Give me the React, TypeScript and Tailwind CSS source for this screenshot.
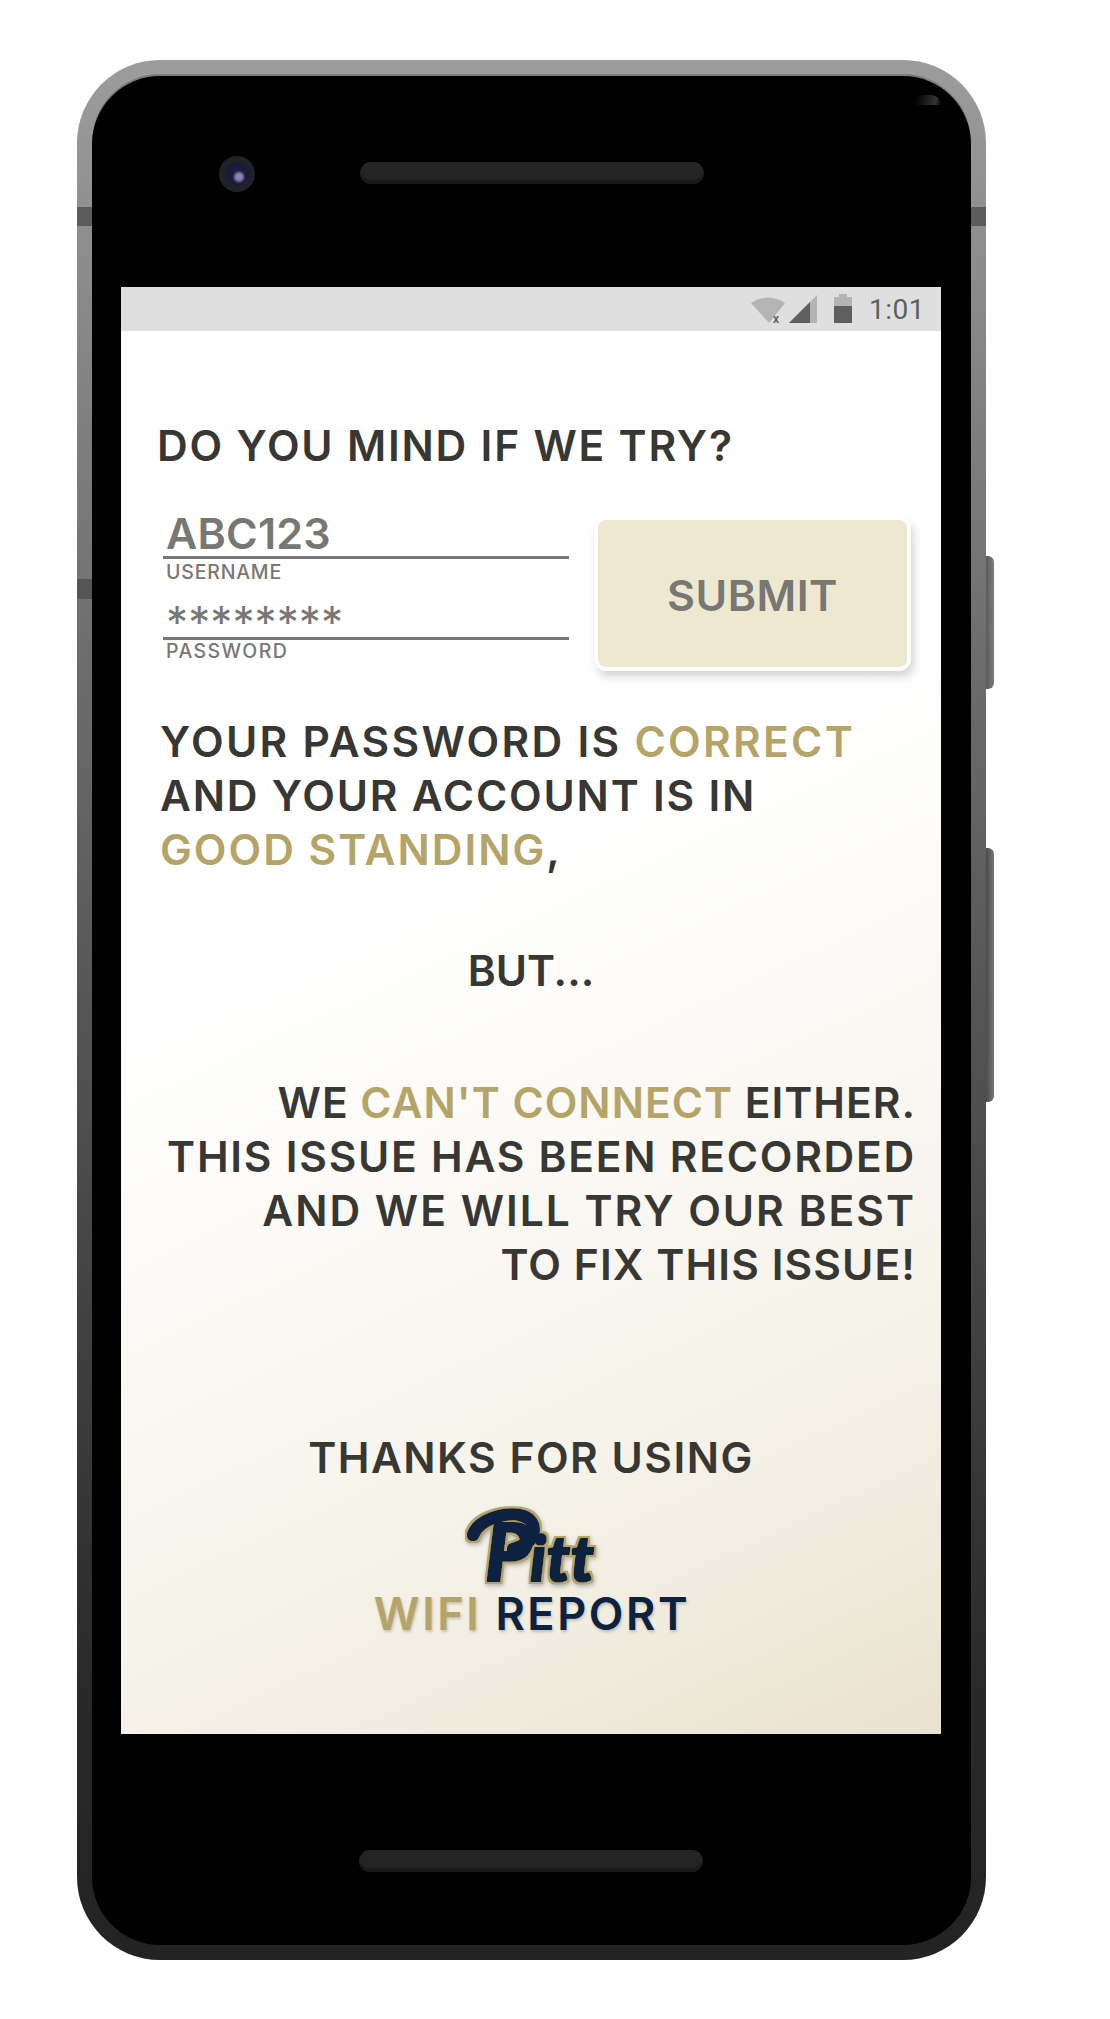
const textFont = "font-['Inter',sans-serif]"

function StatusIcons() {
  return (
    <svg width="102" height="32" viewBox="0 0 102 32" className="shrink-0">
      <path d="M0 9 Q17 -2 34 9 L18 29 Z" fill="#b4b4b4" />
      <text x="22" y="29" fontSize="12" fontWeight="600" fill="#5f5f5f" fontFamily="Roboto, sans-serif">x</text>
      <path d="M38 29 L66 1 V29 Z" fill="#b4b4b4" />
      <path d="M38 29 L59 8 V29 Z" fill="#5f5f5f" />
      <path d="M88 0 H96 V3 H101 V12 H83 V3 H88 Z" fill="#b4b4b4" />
      <rect x="83" y="12" width="18" height="17" fill="#5f5f5f" />
    </svg>
  )
}

function PittLogo() {
  return (
    <svg width="144" height="85" viewBox="0 0 144 85" className="ml-[3px] block overflow-visible drop-shadow-[1px_2px_2px_rgba(0,0,0,0.25)]">
      <defs>
        <filter id="pitt-outline" x="-10%" y="-10%" width="120%" height="120%">
          <feMorphology in="SourceAlpha" operator="dilate" radius="1.2" result="body" />
          <feGaussianBlur in="body" stdDeviation="0.5" result="bodySoft" />
          <feFlood floodColor="#0c2340" />
          <feComposite in2="bodySoft" operator="in" result="navy" />
          <feMorphology in="SourceAlpha" operator="dilate" radius="3" result="edge" />
          <feGaussianBlur in="edge" stdDeviation="0.6" result="edgeSoft" />
          <feFlood floodColor="#b5a468" />
          <feComposite in2="edgeSoft" operator="in" result="gold" />
          <feMerge>
            <feMergeNode in="gold" />
            <feMergeNode in="navy" />
          </feMerge>
        </filter>
      </defs>
      <g filter="url(#pitt-outline)">
        <path d="M12 29 C18 12 48 5 62 10 C78 16 78 36 52 43" fill="none" stroke="#0c2340" strokeWidth="10" strokeLinecap="round" />
        <text x="24" y="75" fontFamily="'Lato', sans-serif" fontStyle="italic" fontWeight="900" fontSize="80" fill="#0c2340">
          P<tspan dx="-2" fontSize="62" letterSpacing="1">itt</tspan>
        </text>
      </g>
    </svg>
  )
}

export default function App() {
  return (
    <div className={`min-h-[2019px] bg-white pl-[77px] pt-[60px] ${textFont}`}>
      <div className="relative h-[1900px] w-[909px] rounded-[83px] bg-[linear-gradient(180deg,#9c9c9c_0%,#6f6f6f_30%,#4f4f4f_55%,#2a2a2a_85%,#232323_100%)] px-[15px] pb-[15px] pt-[16px]">
        {/* frame bands */}
        <div className="absolute left-0 top-[147px] h-[19px] w-[15px] bg-[#5c5c5c]" />
        <div className="absolute right-0 top-[147px] h-[19px] w-[15px] bg-[#5c5c5c]" />
        <div className="absolute left-0 top-[519px] h-[20px] w-[15px] bg-[#555555]" />

        {/* side buttons */}
        <div className="absolute right-[-8px] top-[496px] h-[133px] w-2 rounded-r-[6px] bg-[linear-gradient(90deg,#5a5a5a,#7d7d7d)]" />
        <div className="absolute right-[-8px] top-[788px] h-[254px] w-2 rounded-r-[6px] bg-[linear-gradient(90deg,#4a4a4a,#777777)]" />

        <div className="relative flex h-full flex-col rounded-[68px] bg-black shadow-[0_-2px_0_rgba(0,0,0,0.2)]">
          <div className="absolute right-[30px] top-[19px] h-[10px] w-[36px] rounded-tr-[20px] bg-[linear-gradient(100deg,transparent_30%,#4a4a4a_85%,transparent)] opacity-70" />

          {/* top bezel */}
          <div className="flex h-[211px] w-full items-start pl-[127px] pt-[80px]">
            <div className="flex h-9 w-9 items-center justify-center rounded-full bg-[#222226]">
              <div className="relative h-6 w-6 rounded-full bg-[#1b1a3a]">
                <div className="absolute left-[9px] top-[10px] h-[10px] w-[10px] rounded-full bg-[#8a82b0] blur-[1px]" />
              </div>
            </div>
            <div className="ml-[105px] mt-[6px] h-[22px] w-[344px] rounded-full bg-[#242424] shadow-[inset_0_-4px_0_#1a1a1a]" />
          </div>

          {/* screen */}
          <div className="ml-[29px] h-[1447px] w-[820px] shrink-0 bg-[linear-gradient(155deg,#ffffff_0%,#ffffff_40%,#f6f3ea_76%,#e9e2cf_100%)] font-semibold text-[#373733]">
            <div className="flex h-[44px] items-center justify-end bg-[#dfdfdf] pr-[16px] pt-[2px]">
              <StatusIcons />
              <span className="ml-[16px] font-['Roboto',sans-serif] text-[28px] font-normal leading-none tracking-[0.5px] text-[#5f5f5f]">1:01</span>
            </div>

            <h1 className="ml-[36px] mt-[88px] text-[42.5px] font-semibold leading-[54px] tracking-[1.8px]">DO YOU MIND IF WE TRY?</h1>

            <div className="ml-[42px] mt-[38px] flex">
              <div className="w-[406px] text-[#777774]">
                <div className="border-b-[3px] border-[#777774] pl-[3px] text-[43px] font-semibold leading-[45px] tracking-[0.2px]">ABC123</div>
                <div className="pl-[3px] text-[19.5px] font-medium leading-[26px] tracking-[0.8px]">USERNAME</div>
                <div className="mt-[9px] border-b-[3px] border-[#777774] pl-[3px] pt-[14px] text-[44px] font-normal leading-[29px] tracking-[0.1px]">********</div>
                <div className="pl-[3px] text-[19.5px] font-medium leading-[23px] tracking-[1.4px]">PASSWORD</div>
              </div>
              <button className="ml-[29px] mt-[9px] flex h-[147px] w-[309px] items-center justify-center rounded-[8px] bg-[#eee8d1] pt-[3px] text-[43px] font-semibold leading-none tracking-[0.5px] text-[#777774] shadow-[0_0_0_4px_#ffffff,3px_6px_8px_4px_rgba(0,0,0,0.16)]">SUBMIT</button>
            </div>

            <p className="ml-[39px] mt-[48px] text-[42.5px] leading-[54px]">
              <span className="tracking-[2.3px]">YOUR PASSWORD IS <span className="text-[#b5a468]">CORRECT</span></span>
              <br />
              <span className="tracking-[1.8px]">AND YOUR ACCOUNT IS IN</span>
              <br />
              <span className="tracking-[2px]"><span className="text-[#b5a468]">GOOD STANDING</span>,</span>
            </p>

            <p className="mt-[67px] text-center text-[42.5px] leading-[54px]">BUT...</p>

            <p className="mr-[25px] mt-[78px] text-right text-[42.5px] leading-[54px]">
              <span className="tracking-[1px]">WE <span className="text-[#b5a468]">CAN'T CONNECT</span> EITHER.</span>
              <br />
              <span className="tracking-[1.75px]">THIS ISSUE HAS BEEN RECORDED</span>
              <br />
              <span className="tracking-[2px]">AND WE WILL TRY OUR BEST</span>
              <br />
              <span className="tracking-[1.1px]">TO FIX THIS ISSUE!</span>
            </p>

            <p className="mt-[139px] text-center text-[42.5px] leading-[54px] tracking-[1.5px]">THANKS FOR USING</p>

            <div className="mt-[21px] flex flex-col items-center">
              <PittLogo />
              <div className="ml-[2px] text-[45px] font-semibold leading-[46px] tracking-[2.6px] [text-shadow:1px_2px_3px_rgba(0,0,0,0.2)]">
                <span className="text-[#b5a468]">WIFI</span> <span className="text-[#0c2340]">REPORT</span>
              </div>
            </div>
          </div>

          {/* bottom bezel */}
          <div className="flex w-full justify-center pt-[116px]">
            <div className="ml-[-1px] h-[22px] w-[344px] rounded-full bg-[#242424] shadow-[inset_0_-4px_0_#1a1a1a]" />
          </div>
        </div>
      </div>
    </div>
  )
}
